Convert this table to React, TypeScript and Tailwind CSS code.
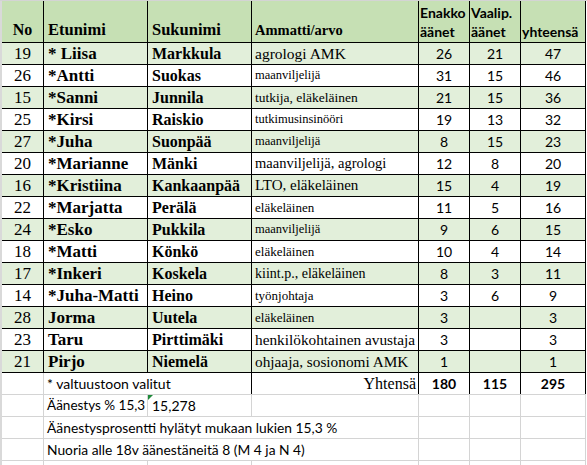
import React from "react";

const serif = { fontFamily: '"Liberation Serif", "Times New Roman", serif' };
const sans = { fontFamily: 'Lato, "Liberation Sans", sans-serif' };

type R = {
  no: string;
  first: string;
  last: string;
  job: string;
  jobSize: string;
  a: string;
  b: string;
  t: string;
};

const rows: R[] = [
  { no: "19", first: "* Liisa", last: "Markkula", job: "agrologi AMK", jobSize: "text-[15.5px]", a: "26", b: "21", t: "47" },
  { no: "26", first: "*Antti", last: "Suokas", job: "maanviljelijä", jobSize: "text-[12.5px]", a: "31", b: "15", t: "46" },
  { no: "15", first: "*Sanni", last: "Junnila", job: "tutkija, eläkeläinen", jobSize: "text-[13.5px]", a: "21", b: "15", t: "36" },
  { no: "25", first: "*Kirsi", last: "Raiskio", job: "tutkimusinsinööri", jobSize: "text-[12.5px]", a: "19", b: "13", t: "32" },
  { no: "27", first: "*Juha", last: "Suonpää", job: "maanviljelijä", jobSize: "text-[12.5px]", a: "8", b: "15", t: "23" },
  { no: "20", first: "*Marianne", last: "Mänki", job: "maanviljelijä, agrologi", jobSize: "text-[14.5px]", a: "12", b: "8", t: "20" },
  { no: "16", first: "*Kristiina", last: "Kankaanpää", job: "LTO, eläkeläinen", jobSize: "text-[15px]", a: "15", b: "4", t: "19" },
  { no: "22", first: "*Marjatta", last: "Perälä", job: "eläkeläinen", jobSize: "text-[13px]", a: "11", b: "5", t: "16" },
  { no: "24", first: "*Esko", last: "Pukkila", job: "maanviljelijä", jobSize: "text-[12.5px]", a: "9", b: "6", t: "15" },
  { no: "18", first: "*Matti", last: "Könkö", job: "eläkeläinen", jobSize: "text-[13px]", a: "10", b: "4", t: "14" },
  { no: "17", first: "*Inkeri", last: "Koskela", job: "kiint.p., eläkeläinen", jobSize: "text-[14px]", a: "8", b: "3", t: "11" },
  { no: "14", first: "*Juha-Matti", last: "Heino", job: "työnjohtaja", jobSize: "text-[13px]", a: "3", b: "6", t: "9" },
  { no: "28", first: "Jorma", last: "Uutela", job: "eläkeläinen", jobSize: "text-[13px]", a: "3", b: "", t: "3" },
  { no: "23", first: "Taru", last: "Pirttimäki", job: "henkilökohtainen avustaja", jobSize: "text-[15.3px]", a: "3", b: "", t: "3" },
  { no: "21", first: "Pirjo", last: "Niemelä", job: "ohjaaja, sosionomi AMK", jobSize: "text-[15.3px]", a: "1", b: "", t: "1" },
];

function Gutter() {
  return <div className="w-[2px] shrink-0 bg-[#d9d9d9]" />;
}

export default function App() {
  return (
    <div className="w-[587px] h-[465px] overflow-hidden bg-white text-black">
      <div className="h-px bg-[#d4d4d4]" />
      {/* header */}
      <div className="flex h-[42px]">
        <Gutter />
        <div className="flex h-[42px] border-b border-black bg-[#c6e0b4]">
          <div className="w-[42px] border-r border-black flex items-end justify-center pb-[2px] text-[16px] font-bold leading-[20px]" style={serif}>No</div>
          <div className="w-[104px] border-r border-black flex items-end pl-[4px] pb-[2px] text-[16.5px] font-bold leading-[20px]" style={serif}>Etunimi</div>
          <div className="w-[104px] border-r border-black flex items-end pl-[4px] pb-[2px] text-[16.5px] font-bold leading-[20px]" style={serif}>Sukunimi</div>
          <div className="w-[167px] border-r border-black flex items-end pl-[3px] pb-[2px] text-[14.5px] font-bold leading-[20px]" style={serif}>Ammatti/arvo</div>
          <div className="w-[51px] border-r border-black flex flex-col justify-end pl-[1px] pb-[1px] text-[14px] font-bold leading-[19px]" style={sans}>
            <span>Enakko</span>
            <span>äänet</span>
          </div>
          <div className="w-[51px] border-r border-black flex flex-col justify-end pl-[1px] pb-[1px] text-[14px] font-bold leading-[19px]" style={sans}>
            <span>Vaalip.</span>
            <span>äänet</span>
          </div>
          <div className="w-[65px] border-r border-black flex items-end pl-[1px] pb-[1px] text-[14px] font-bold leading-[19px]" style={sans}>yhteensä</div>
        </div>
      </div>
      {/* data rows */}
      {rows.map((r, i) => (
        <div key={r.no} className="flex h-[22px]">
          <Gutter />
          <div className={`flex h-[22px] border-b border-black ${i % 2 === 0 ? "bg-[#e2efda]" : "bg-white"}`}>
            <div className="w-[42px] border-r border-black flex items-center justify-center text-[17px] leading-none" style={serif}>{r.no}</div>
            <div className="w-[104px] border-r border-black flex items-center pl-[4px] text-[17px] font-bold leading-none whitespace-nowrap" style={serif}>{r.first}</div>
            <div className="w-[104px] border-r border-black flex items-center pl-[4px] text-[16px] font-bold leading-none whitespace-nowrap" style={serif}>{r.last}</div>
            <div className={`w-[167px] border-r border-black flex items-center pl-[3px] leading-none whitespace-nowrap ${r.jobSize}`} style={serif}>{r.job}</div>
            <div className="w-[51px] border-r border-black flex items-center justify-center text-[14px] leading-none" style={sans}>{r.a}</div>
            <div className="w-[51px] border-r border-black flex items-center justify-center text-[14px] leading-none" style={sans}>{r.b}</div>
            <div className="w-[65px] border-r border-black flex items-center justify-center text-[14px] leading-none" style={sans}>{r.t}</div>
          </div>
        </div>
      ))}
      {/* totals row */}
      <div className="flex h-[22px]">
        <Gutter />
        <div className="flex h-[22px] border-b border-[#d4d4d4]">
          <div className="w-[42px] border-r border-[#d4d4d4]" />
          <div className="w-[208px] border-r border-black flex items-center pl-[3px] text-[14px] leading-none whitespace-nowrap" style={sans}>* valtuustoon valitut</div>
          <div className="w-[167px] border-r border-black flex items-center justify-end pr-[2px] text-[16px] leading-none" style={serif}>Yhtensä</div>
          <div className="w-[51px] border-r border-black flex items-center justify-center text-[14px] font-bold leading-none" style={sans}>180</div>
          <div className="w-[51px] border-r border-black flex items-center justify-center text-[14px] font-bold leading-none" style={sans}>115</div>
          <div className="w-[65px] border-r border-black flex items-center justify-center text-[14px] font-bold leading-none" style={sans}>295</div>
        </div>
      </div>
      {/* footer rows */}
      <div className="flex h-[22px]">
        <Gutter />
        <div className="flex h-[22px] border-b border-[#d4d4d4]">
          <div className="w-[42px] border-r border-[#d4d4d4]" />
          <div className="w-[104px] border-r border-[#d4d4d4] flex items-center pl-[3px] text-[13.5px] leading-none whitespace-nowrap overflow-hidden" style={sans}>Äänestys % 15,3</div>
          <div className="relative w-[104px] border-r border-[#d4d4d4] flex items-center pl-[4px] text-[14px] leading-none" style={sans}>
            <span className="absolute left-0 top-0 w-0 h-0 border-t-[5px] border-r-[5px] border-t-[#1e8a3a] border-r-transparent" />
            15,278
          </div>
          <div className="w-[167px] border-r border-[#d4d4d4]" />
          <div className="w-[51px] border-r border-[#d4d4d4]" />
          <div className="w-[51px] border-r border-[#d4d4d4]" />
          <div className="w-[65px] border-r border-[#d4d4d4]" />
        </div>
      </div>
      {[
        "Äänestysprosentti hylätyt mukaan lukien 15,3 %",
        "Nuoria alle 18v äänestäneitä 8 (M 4 ja N 4)",
      ].map((t) => (
        <div key={t} className="flex h-[22px]">
          <Gutter />
          <div className="flex h-[22px] border-b border-[#d4d4d4]">
            <div className="w-[42px] border-r border-[#d4d4d4]" />
            <div className="w-[375px] border-r border-[#d4d4d4] flex items-center pl-[3px] text-[13.8px] leading-none whitespace-nowrap" style={sans}>{t}</div>
            <div className="w-[51px] border-r border-[#d4d4d4]" />
            <div className="w-[51px] border-r border-[#d4d4d4]" />
            <div className="w-[65px] border-r border-[#d4d4d4]" />
          </div>
        </div>
      ))}
      <div className="flex h-[22px]">
        <Gutter />
        <div className="flex h-[22px] border-b border-[#d4d4d4]">
          <div className="w-[42px] border-r border-[#d4d4d4]" />
          <div className="w-[104px] border-r border-[#d4d4d4]" />
          <div className="w-[104px] border-r border-[#d4d4d4]" />
          <div className="w-[167px] border-r border-[#d4d4d4]" />
          <div className="w-[51px] border-r border-[#d4d4d4]" />
          <div className="w-[51px] border-r border-[#d4d4d4]" />
          <div className="w-[65px] border-r border-[#d4d4d4]" />
        </div>
      </div>
    </div>
  );
}
